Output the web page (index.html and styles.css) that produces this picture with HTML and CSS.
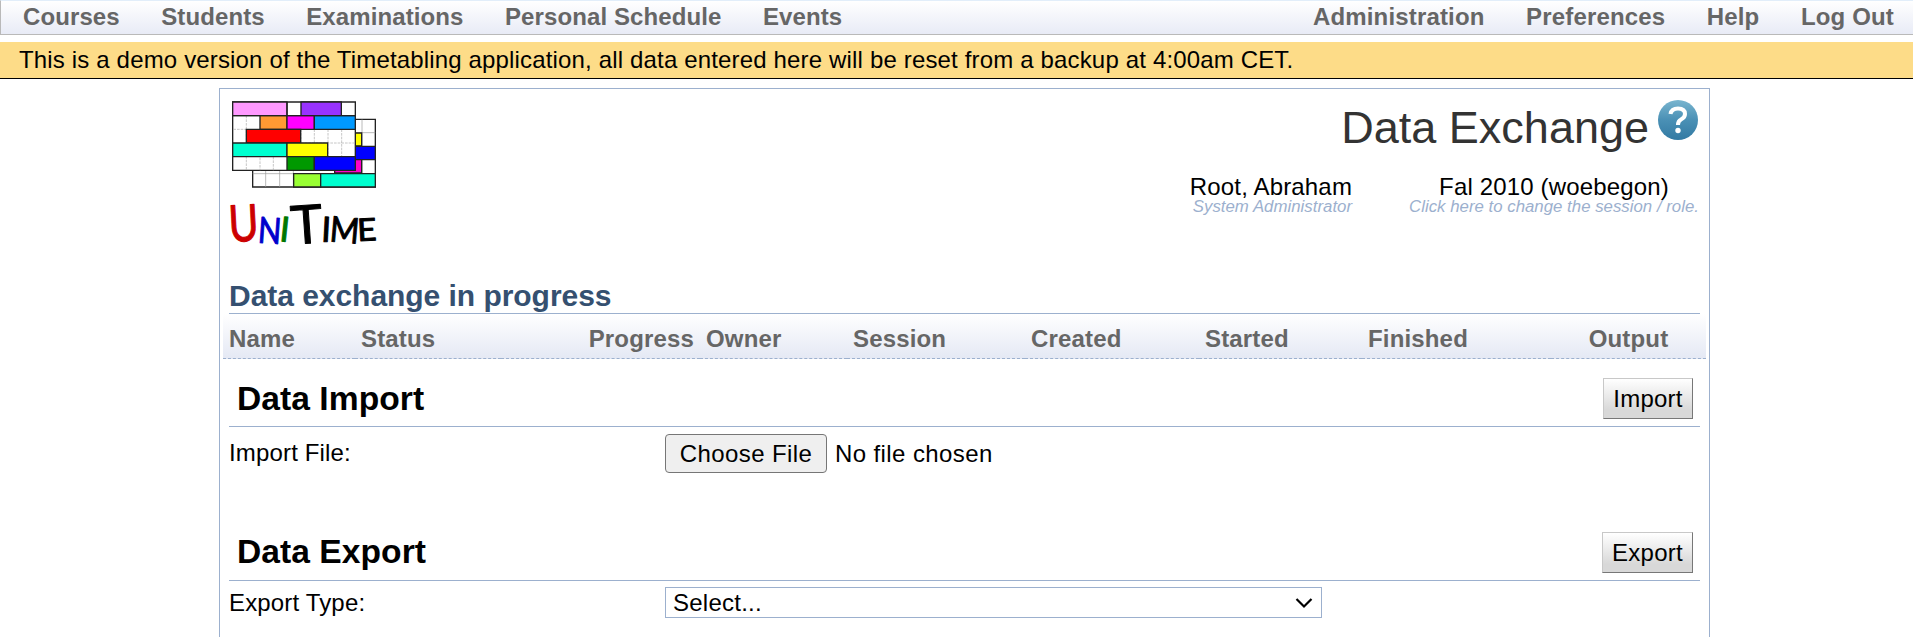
FILE: index.html
```html
<!DOCTYPE html>
<html lang="en">
<head>
<meta charset="utf-8">
<title>Data Exchange</title>
<link rel="stylesheet" href="styles.css">
</head>
<body>
<nav class="menu">
  <div class="menu-group"><a>Courses</a><a>Students</a><a>Examinations</a><a>Personal Schedule</a><a>Events</a></div>
  <div class="menu-group menu-right"><a>Administration</a><a>Preferences</a><a>Help</a><a>Log Out</a></div>
</nav>
<div class="notice">This is a demo version of the Timetabling application, all data entered here will be reset from a backup at 4:00am CET.</div>
<main class="page">
  <header class="header">
    <svg class="logo" viewBox="54 39 453 510" role="img" aria-label="UniTime">
      <g stroke="#222" stroke-width="4">
        <path fill="#fff" d="M128 103H496V306H128Z"/>
        <path fill="none" stroke="#999" stroke-width="2" d="M167 256V306M209 256V306M250 256V306M128 266H250M456 103V266M436 143H496"/>
        <path fill="#ff0" d="M400 144H455V183H400Z"/>
        <path fill="#00f" d="M400 184H496V224H400Z"/>
        <path fill="#f0c" d="M374 224H455V264H374Z"/>
        <path fill="#9f3" d="M251 266H332V306H251Z"/>
        <path fill="#00ffcf" d="M332 266H496V306H332Z"/>
        <path fill="#fff" d="M68 51H436V256H68Z"/>
        <path fill="none" stroke="#aaa" stroke-width="2" stroke-dasharray="8 3" d="M109 92V256M150 174V256M190 215V256M273 133V174M313 133V174M354 133V215M395 133V215M70 133H109M273 174H434"/>
        <path fill="#f9f" d="M68 51H231V92H68Z"/>
        <path fill="#93f" d="M273 51H394V92H273Z"/>
        <path fill="#f93" d="M150 92H231V133H150Z"/>
        <path fill="#f0f" d="M231 92H313V133H231Z"/>
        <path fill="#09f" d="M313 92H436V133H313Z"/>
        <path fill="#f00" d="M109 133H272V174H109Z"/>
        <path fill="#00ffcf" d="M68 174H231V215H68Z"/>
        <path fill="#ff0" d="M231 174H353V215H231Z"/>
        <path fill="#090" d="M231 215H313V256H231Z"/>
        <path fill="#00f" d="M313 215H436V256H313Z"/>
        <path fill="none" d="M68 92H436M231 51V92"/>
      </g>
      <g class="wordmark">
        <text x="56" y="469" font-size="152" textLength="90" lengthAdjust="spacingAndGlyphs" fill="#c00" stroke="#c00" transform="rotate(-3 100 415)">U</text>
        <text x="144" y="475" font-size="108" textLength="70" lengthAdjust="spacingAndGlyphs" fill="#00c" stroke="#00c" transform="rotate(4 178 440)">N</text>
        <text x="210" y="470" font-size="104" fill="#070" stroke="#070" transform="rotate(6 224 430)">I</text>
        <text x="242" y="475" font-size="160" textLength="96" lengthAdjust="spacingAndGlyphs" fill="#000" stroke="#000" transform="rotate(-4 290 415)">T</text>
        <text x="334" y="470" font-size="104" fill="#000" stroke="#000" transform="rotate(3 348 430)">I</text>
        <text x="360" y="473" font-size="106" textLength="88" lengthAdjust="spacingAndGlyphs" fill="#000" stroke="#000" transform="rotate(5 405 440)">M</text>
        <text x="441" y="467" font-size="94" textLength="58" lengthAdjust="spacingAndGlyphs" fill="#000" stroke="#000" transform="rotate(-3 470 430)">E</text>
      </g>
    </svg>
    <div class="header-info">
      <div class="title-row">
        <h1>Data Exchange</h1>
        <svg class="help" viewBox="0 0 42 42">
          <defs><linearGradient id="help-fill" x2="0" y2="1"><stop stop-color="#79b5cf"/><stop offset=".5" stop-color="#4a90b5"/><stop offset="1" stop-color="#337aa3"/></linearGradient></defs>
          <circle cx="21" cy="21" r="20" fill="url(#help-fill)"/>
          <path d="M13.500 15Q14.500 9.500 21 9.500Q28 9.500 28 15Q28 18.500 24 20.500Q21 22 21 26" fill="none" stroke="#fff" stroke-width="4"/>
          <circle cx="21" cy="31.500" r="2.700" fill="#fff"/>
        </svg>
      </div>
      <div class="who">
        <div class="user"><div>Root, Abraham</div><div class="hint">System Administrator</div></div>
        <div class="session"><div>Fal 2010 (woebegon)</div><div class="hint">Click here to change the session / role.</div></div>
      </div>
    </div>
  </header>
  <h2 class="progress-title">Data exchange in progress</h2>
  <div class="columns">
    <span>Name</span><span>Status</span><span class="right">Progress</span><span>Owner</span><span>Session</span><span>Created</span><span>Started</span><span>Finished</span><span class="center">Output</span>
  </div>
  <section class="import">
    <div class="section-head"><h2>Data Import</h2><button class="action import-action">Import</button></div>
    <div class="field file-field"><span>Import File:</span><div class="file"><button class="choose">Choose File</button><span>No file chosen</span></div></div>
  </section>
  <section class="export">
    <div class="section-head"><h2>Data Export</h2><button class="action export-action">Export</button></div>
    <div class="field type-field"><span>Export Type:</span><div class="select"><span>Select...</span><svg viewBox="0 0 18 12"><path d="M1.500 2L9 9.500L16.500 2"/></svg></div></div>
  </section>
</main>
</body>
</html>
```

FILE: styles.css
```css
* { box-sizing: border-box; }
body { margin: 0; height: 637px; overflow: hidden; background: #fff; color: #000; font: 24px/28px "Liberation Sans", Arial, sans-serif; letter-spacing: .16px; }
h1, h2 { margin: 0; }
button { font: inherit; color: inherit; margin: 0; white-space: nowrap; }
.menu { height: 35px; display: flex; justify-content: space-between; padding: 0 19px 0 22px; border: solid #b9b9b9; border-width: 1px 0 1px 1px; border-top-color: #e2eefa; background: linear-gradient(#fff, #e8ebf6); color: #666; font-weight: bold; line-height: 32px; letter-spacing: .1px; white-space: nowrap; }
.menu-group { display: flex; gap: 41.5px; }
.menu-right { letter-spacing: .16px; }
.notice { margin-top: 7px; height: 37px; padding-left: 19px; background: #fddc88; border-bottom: 1px solid #000; line-height: 36px; white-space: nowrap; }
.page { width: 1491px; height: 560px; margin: 9px 0 0 219px; border: 1px solid #9cb0ce; }
.header { display: flex; justify-content: space-between; height: 184px; padding: 9px 10px 0 8px; }
.logo { width: 151px; height: 170px; }
.wordmark { font-family: Lato, sans-serif; stroke-width: 3; stroke-linejoin: round; }
.title-row { display: flex; justify-content: flex-end; gap: 8px; height: 58px; }
.title-row h1 { font-size: 45px; font-weight: normal; line-height: 60px; letter-spacing: 0; color: #333; }
.help { width: 42px; height: 42px; margin-top: 1px; }
.who { display: flex; justify-content: flex-end; gap: 57px; padding-top: 16px; line-height: 30px; white-space: nowrap; }
.user { text-align: right; }
.session { text-align: center; }
.hint { font-size: 16.8px; line-height: 16px; margin-top: -3px; letter-spacing: .02px; font-style: italic; color: #9cb0ce; }
.progress-title { height: 41px; margin: 0 9px; font-size: 30px; line-height: 46px; letter-spacing: -.04px; color: #355070; border-bottom: 1px solid #9cb0ce; }
.columns { display: grid; grid-template-columns: 132px 146px 199px 147px 178px 174px 163px 189px 155px; height: 45px; margin: 0 3px; background: linear-gradient(#fff, #e4e8f4); color: #666; font-weight: bold; line-height: 39px; }
.columns span { padding: 5px 6px 0; border-bottom: 1px dashed #9cb0ce; }
.columns .right { text-align: right; }
.columns .center { text-align: center; }
.section-head { display: flex; justify-content: space-between; align-items: flex-start; margin: 0 9px; padding: 0 7px 0 8px; border-bottom: 1px solid #9cb0ce; }
.section-head h2 { font-size: 33.6px; line-height: 41px; letter-spacing: .05px; }
.import .section-head { height: 68px; padding-top: 19px; }
.export .section-head { height: 63px; padding-top: 14px; }
.export h2 { line-height: 39px; }
.action { height: 41px; padding: 0; line-height: 38px; border: 1px solid; border-color: #c8c8c8 #777 #777 #c8c8c8; background: linear-gradient(#fff, #d8d8d8 80%); letter-spacing: .25px; }
.import-action { width: 90px; }
.export-action { width: 91px; line-height: 36px; }
.field { display: grid; grid-template-columns: 436px 1fr; margin: 0 9px; }
.file-field { height: 91px; padding-top: 7px; line-height: 38px; }
.file { display: flex; gap: 8px; height: 39px; line-height: 39px; letter-spacing: .4px; }
.choose { width: 162px; padding: 0; border: 1px solid #767676; border-radius: 4px; background: #efefef; line-height: 37px; letter-spacing: .4px; }
.type-field { padding-top: 6px; line-height: 32px; }
.select { width: 657px; height: 31px; display: flex; justify-content: space-between; align-items: center; padding: 0 8px 0 7px; border: 1px solid #9cb0ce; line-height: 29px; letter-spacing: .25px; }
.select svg { width: 18px; height: 12px; fill: none; stroke: #000; stroke-width: 2.2; }
```
